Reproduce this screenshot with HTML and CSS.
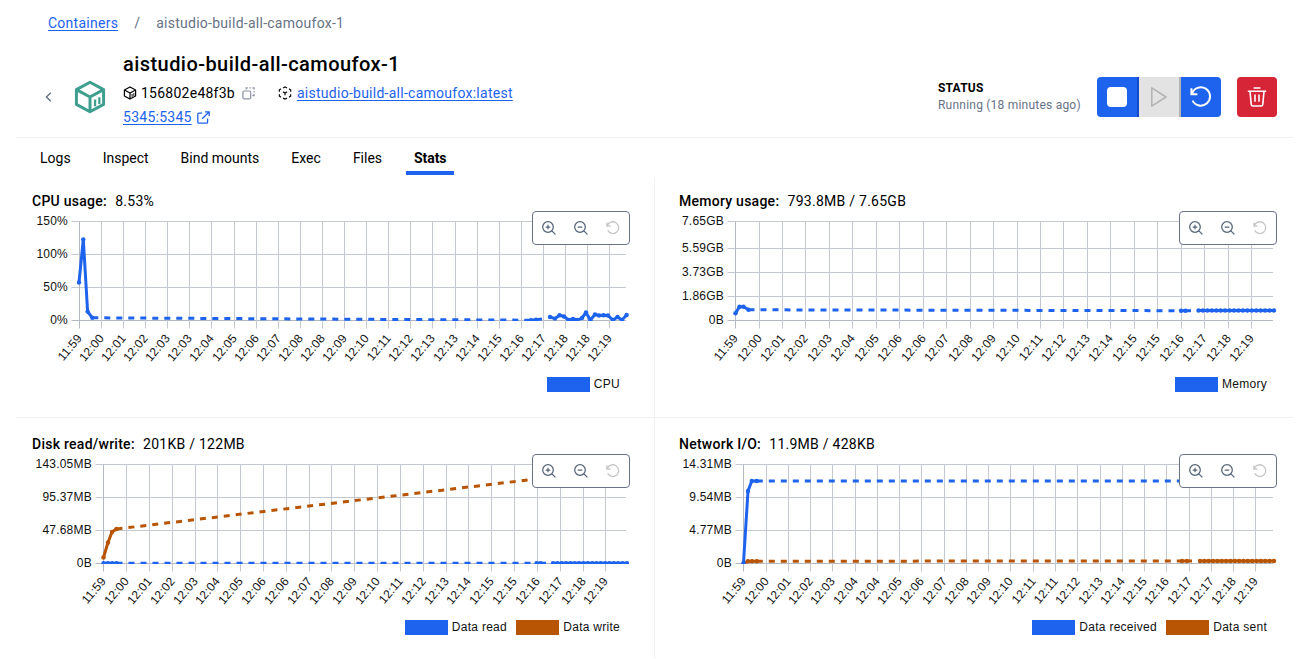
FILE: index.html
```html
<!DOCTYPE html>
<html lang="en">
<head>
<meta charset="utf-8">
<title>aistudio-build-all-camoufox-1</title>
<link rel="stylesheet" href="styles.css">
</head>
<body>
<svg width="0" height="0" class="sprite" aria-hidden="true">
  <symbol id="i-cube" viewBox="0 0 24 24">
    <path d="M12 1.6 21.6 6.8V17.2L12 22.4 2.4 17.2V6.8Z M2.4 6.8 12 12 21.6 6.8 M12 12V22.4" fill="none" stroke="currentColor" stroke-width="2.1" stroke-linejoin="round"/>
    <path d="M15.6 13.8V18.6M18.6 12.2V17" fill="none" stroke="currentColor" stroke-width="1.6"/>
  </symbol>
  <symbol id="i-zoom-in" viewBox="0 0 14 14">
    <path d="M6 .7a5.3 5.3 0 1 0 0 10.6A5.3 5.3 0 0 0 6 .7ZM9.9 9.9 13.4 13.4M6 3.7V8.3M3.7 6H8.3" fill="none" stroke="currentColor" stroke-width="1.25"/>
  </symbol>
  <symbol id="i-zoom-out" viewBox="0 0 14 14">
    <path d="M6 .7a5.3 5.3 0 1 0 0 10.6A5.3 5.3 0 0 0 6 .7ZM9.9 9.9 13.4 13.4M3.7 6H8.3" fill="none" stroke="currentColor" stroke-width="1.25"/>
  </symbol>
  <symbol id="i-reset" viewBox="0 0 22 22">
    <path d="M1.4 2.2V8.2H7.4M2 7.8A9.2 9.2 0 1 1 2.6 14.6" fill="none" stroke="currentColor" stroke-width="2"/>
  </symbol>
</svg>

<nav class="crumbs">
  <a href="#">Containers</a><span class="sep">/</span><span>aistudio-build-all-camoufox-1</span>
</nav>

<header class="head">
  <svg class="back" width="7" height="10" viewBox="0 0 7 10"><path d="M5.8 .8 1.4 5 5.8 9.2" fill="none" stroke="#677285" stroke-width="1.4"/></svg>
  <svg class="logo" width="34" height="34"><use href="#i-cube"/></svg>
  <div class="info">
    <h1>aistudio-build-all-camoufox-1</h1>
    <div class="meta">
      <svg class="cube" width="14" height="14"><use href="#i-cube"/></svg>
      <span class="hash">156802e48f3b</span>
      <svg class="copy" width="13" height="13" viewBox="0 0 13 13" fill="none" stroke="#8993a5" stroke-width="1.2"><rect x=".9" y="4" width="7.8" height="7.8" rx="1.2"/><path d="M4.2 2.4V.9H5.8M7.4.9H8.8M10.4.9H12V2.4M12 4V5.4M12 7V8.6H10.4"/></svg>
      <svg class="image" width="14" height="14" viewBox="0 0 14 14" fill="none" stroke="#111" stroke-width="1.3"><path d="M5 2 7 .9 9 2M11 2.9 12.6 3.8V5.8M12.6 8.2V10.2L11 11.1M9 12.1 7 13.1 5 12.1M3 11.1 1.4 10.2V8.2M1.4 5.8V3.8L3 2.9M7 7V9.3M7 7 5 5.9M7 7 9 5.9"/></svg>
      <a href="#">aistudio-build-all-camoufox:latest</a>
    </div>
    <div class="meta port">
      <a href="#">5345:5345</a>
      <svg width="13" height="13" viewBox="0 0 13 13" fill="none" stroke="#1d63ed" stroke-width="1.3"><path d="M5.2 2.2H2A1.2 1.2 0 0 0 .8 3.4V11A1.2 1.2 0 0 0 2 12.2H9.4A1.2 1.2 0 0 0 10.6 11V7.6M8 .8H12.2V5M12 1 5.2 7.8"/></svg>
    </div>
  </div>
  <div class="status">
    <strong>STATUS</strong>
    <span>Running (18 minutes ago)</span>
  </div>
  <div class="actions">
    <button class="stop" aria-label="Stop"><i></i></button>
    <button class="start" aria-label="Start"><svg width="18" height="22" viewBox="0 0 18 22"><path d="M1.8 1.8V20.2L16 11Z" fill="none" stroke="#b4b4b4" stroke-width="1.6" stroke-linejoin="round"/></svg></button>
    <button class="restart" aria-label="Restart"><svg width="22" height="22"><use href="#i-reset"/></svg></button>
  </div>
  <button class="trash" aria-label="Delete"><svg width="20" height="20" viewBox="0 0 20 20" fill="none" stroke="#fff" stroke-width="1.6"><path d="M.8 4.2H19.2M6.6 1H13.4M3 4.2 4.2 17.4A1.8 1.8 0 0 0 6 19H14A1.8 1.8 0 0 0 15.8 17.4L17 4.2M8 7.6V14.8M12 7.6V14.8"/></svg></button>
</header>

<nav class="tabs">
  <a>Logs</a><a>Inspect</a><a>Bind mounts</a><a>Exec</a><a>Files</a><a class="on">Stats</a>
</nav>

<main class="grid">
  <section class="panel" id="cpu"><h2>CPU usage: <span>8.53%</span></h2></section>
  <section class="panel" id="memory"><h2>Memory usage: <span>793.8MB / 7.65GB</span></h2></section>
  <section class="panel" id="disk"><h2>Disk read/write: <span>201KB / 122MB</span></h2></section>
  <section class="panel" id="network"><h2>Network I/O: <span>11.9MB / 428KB</span></h2></section>
</main>
<script src="charts.js"></script>
</body>
</html>
```

FILE: styles.css
```css
* { box-sizing: border-box; }
body {
  margin: 0;
  height: 659px;
  overflow: hidden;
  background: #fff;
  color: #000;
  font: 14px/20px Roboto, "Liberation Sans", sans-serif;
  letter-spacing: .26px;
}
.sprite { display: block; height: 0; }
svg { display: block; flex: none; }
a { color: #1d63ed; text-underline-offset: 2px; }
button { border: 0; padding: 0; display: grid; place-items: center; height: 40px; }

.crumbs { display: flex; height: 48px; padding: 13px 0 0 48px; color: #677285; }
.crumbs .sep { margin: 0 16px; }

.head {
  display: flex;
  align-items: flex-start;
  height: 90px;
  margin: 0 16px;
  border-bottom: 1px solid #f0f0f2;
}
.back { margin: 44px 0 0 28.5px; }
.logo { margin: 31.5px 0 0 21px; color: #3f9f8f; }
.info { flex: 1; margin-left: 16.5px; }
h1 { margin: 3px 0 0; font-size: 20px; line-height: 26px; font-weight: 500; letter-spacing: .44px; }
.meta { display: flex; align-items: center; margin-top: 6px; height: 20px; }
.meta.port { margin-top: 4px; gap: 5px; }
.hash { margin-left: 4px; letter-spacing: .25px; }
.copy { margin: 0 23.5px 0 7px; }
.image { margin-right: 4.5px; }

.status { width: 159px; padding-top: 32px; display: grid; font-size: 12px; line-height: 17px; color: #677285; letter-spacing: .22px; }
.status strong { font-weight: 700; color: #000; letter-spacing: .2px; }
.actions { display: flex; margin: 29px 16px 0 0; border-radius: 4px; overflow: hidden; }
.stop { width: 42px; background: #1d63ed; border-right: 2px solid #1249c8; }
.stop i { width: 20px; height: 20px; border-radius: 4px; background: #fff; }
.start { width: 42px; background: #e3e3e3; border-right: 2px solid #b4b4b4; }
.restart { width: 40px; background: #1d63ed; color: #fff; }
.trash { width: 40px; margin: 29px 16px 0 0; border-radius: 4px; background: #d52536; }

.tabs { display: flex; gap: 16px; height: 40px; padding: 0 0 3px 32px; line-height: 41px; letter-spacing: 0; }
.tabs a { height: 37px; padding: 0 8px; color: #000; }
.tabs .on { font-weight: 700; letter-spacing: -.1px; border-bottom: 4px solid #1d63ed; }

.grid { display: grid; grid-template-columns: 639px 638px; grid-template-rows: 240px 240px; margin: 0 16px; }
.panel { position: relative; padding: 13px 0 0 16px; border-bottom: 1px solid #f0f0f2; }
.panel:nth-child(odd) { border-right: 1px solid #f0f0f2; }
.panel:nth-child(even) { padding-left: 24px; }
.panel:nth-child(n+3) { padding-top: 16px; border-bottom: 0; }
h2 { margin: 0; font-size: 14px; line-height: 20px; font-weight: 500; }
h2 span { font-weight: 400; margin-left: 4.5px; }
.plot { position: relative; width: 598px; }
.plot text { font: 12px "Liberation Sans", Arial, sans-serif; letter-spacing: .2px; fill: #111; text-anchor: end; }
.tools {
  position: absolute;
  top: 0;
  right: 0;
  width: 98px;
  height: 34px;
  display: flex;
  align-items: center;
  justify-content: space-between;
  padding: 0 9px;
  border: 1px solid #677285;
  border-radius: 4px;
  background: #fff;
  color: #556378;
}
.tools .off { color: #c5c5c5; }
.legend { display: flex; justify-content: flex-end; gap: 9px; padding-right: 10px; font: 12px/15px "Liberation Sans", Arial, sans-serif; letter-spacing: .27px; color: #111; }
.legend span { display: flex; gap: 4.3px; }
.legend i { width: 43px; height: 15px; }
.blue { background: #1d63ed; }
.orange { background: #b85504; }
```

FILE: charts.js
```js
const BLUE = '#1d63ed', ORANGE = '#b85504';
const BASE = 109.5, TOP = 10.5, RIGHT = 594;

// Evenly spaced samples at a constant level.
function flat(from, to, step, y) {
  const pts = [];
  for (let x = from; x <= to + 0.01; x += step) pts.push([x, y]);
  return pts;
}

const charts = {
  cpu: {
    left: 47.5, step: 22.1, nudge: -0.15,
    times: '11:59 12:00 12:01 12:02 12:03 12:03 12:04 12:05 12:06 12:07 12:08 12:08 12:09 12:10 12:11 12:12 12:13 12:13 12:14 12:15 12:16 12:17 12:18 12:18 12:19',
    rows: [[10.5, '150%'], [43.5, '100%'], [76.5, '50%'], [109.5, '0%']],
    series: [{
      name: 'CPU', color: BLUE,
      head: [[47, 71.5], [51.3, 28.5], [55.6, 100.5], [60.3, 106.8]],
      mid: [[499, 109.2], [504, 108.7], [510, 108]],
      tail: [[518, 106], [523, 107.6], [527.5, 104.3], [532, 105.5], [536.5, 109], [541, 108], [545.5, 109], [550, 107], [554, 101.5], [558.4, 109], [563, 103.5], [567, 104.5], [571.5, 104.3], [576, 104.5], [581, 109], [585.5, 106], [590, 109], [594.6, 104]]
    }]
  },
  memory: {
    left: 56.5, step: 23.45, nudge: 0.1,
    times: '11:59 12:00 12:01 12:02 12:03 12:04 12:05 12:06 12:06 12:07 12:08 12:09 12:10 12:11 12:12 12:13 12:14 12:15 12:15 12:16 12:17 12:18 12:19',
    rows: [[10.5, '7.65GB'], [37.5, '5.59GB'], [61.5, '3.73GB'], [85.5, '1.86GB'], [109.5, '0B']],
    series: [{
      name: 'Memory', color: BLUE,
      head: [[56.5, 102.3], [60.5, 95.8], [64.5, 95.8], [69.5, 98.8]],
      mid: [[502, 99.7], [506.5, 99.7], [512, 99.7]],
      tail: flat(519.5, 595, 4.44, 99.5)
    }]
  },
  disk: {
    left: 71.5, step: 22.83, nudge: 0.2,
    times: '11:59 12:00 12:01 12:02 12:03 12:04 12:05 12:06 12:06 12:07 12:08 12:09 12:10 12:11 12:12 12:13 12:14 12:15 12:15 12:16 12:17 12:18 12:19',
    rows: [[10.5, '143.05MB'], [43.5, '95.37MB'], [76.5, '47.68MB'], [109.5, '0B']],
    series: [
      { name: 'Data write', color: ORANGE,
        head: [[71.5, 103.5], [76, 88.5], [80, 78], [84.5, 75]],
        mid: [[504, 25], [508, 25]], tail: flat(521, 595, 4.35, 25), hideTail: true },
      { name: 'Data read', color: BLUE,
        head: flat(71.5, 84.5, 4.33, 109.2),
        mid: [[504.5, 109.2], [508.5, 109.2], [514, 109.2]], tail: flat(521, 595, 4.35, 109.2) }
    ]
  },
  network: {
    left: 64.5, step: 22.27, nudge: 0.25,
    times: '11:59 12:00 12:01 12:02 12:03 12:04 12:04 12:05 12:06 12:07 12:08 12:09 12:10 12:11 12:11 12:12 12:13 12:14 12:15 12:16 12:17 12:17 12:18 12:19',
    rows: [[10.5, '14.31MB'], [43.5, '9.54MB'], [76.5, '4.77MB'], [109.5, '0B']],
    series: [
      { name: 'Data sent', color: ORANGE,
        head: [[64.5, 109.5], [68.8, 107.2], [73, 107.2], [77.8, 107.2]],
        mid: [[503, 107], [508, 107], [513, 107]], tail: flat(521, 595, 4.35, 107) },
      { name: 'Data received', color: BLUE,
        head: [[64.5, 109], [69, 37], [72.8, 27], [77.8, 27]],
        mid: [[503, 27], [508, 27]], tail: flat(521, 590, 4.35, 27), hideTail: true }
    ]
  }
};

const line = (pts, color, extra = '') =>
  `<polyline points="${pts.map(p => p.join()).join(' ')}" fill="none" stroke="${color}" stroke-width="3" stroke-linejoin="round" ${extra}/>`;
const dots = (pts, color) =>
  pts.map(p => `<circle cx="${p[0]}" cy="${p[1]}" r="2.2" fill="${color}"/>`).join('');

for (const [id, c] of Object.entries(charts)) {
  let s = '';
  for (const [y, label] of c.rows) {
    s += `<path d="M${c.left - 8} ${y}H${RIGHT}" stroke="${y === BASE ? '#b3b8c2' : '#c4c8d1'}"/>`;
    s += `<text x="${c.left - 11.6}" y="${y + 3.8}">${label}</text>`;
  }
  c.times.split(' ').forEach((t, i) => {
    const x = i ? Math.floor(c.left + i * c.step + c.nudge) + 0.5 : c.left;
    s += `<path d="M${x} ${TOP}V${BASE + 8}" stroke="${i ? '#c4c8d1' : '#b3b8c2'}"/>`;
    s += `<text transform="translate(${x - 0.4} ${BASE + 15}) rotate(-50)" y="4.6">${t}</text>`;
  });
  s += `<clipPath id="clip-${id}"><rect x="${c.left - 3}" y="${TOP - 3}" width="${RIGHT - c.left + 6}" height="${BASE - TOP + 3.5}"/></clipPath><g clip-path="url(#clip-${id})">`;
  for (const d of c.series) {
    s += line([d.head.at(-1), d.mid[0]], d.color, 'stroke-dasharray="6 6"');
    s += line(d.head, d.color) + dots(d.head, d.color);
    if (!d.hideTail) s += line(d.mid, d.color) + line(d.tail, d.color) + dots(d.tail, d.color) + dots(d.mid.slice(0, 2), d.color);
  }
  s += '</g>';
  const legend = [...c.series].sort((a, b) => (b.color === BLUE) - (a.color === BLUE));
  document.getElementById(id).insertAdjacentHTML('beforeend', `
    <div class="plot">
      <svg width="598" height="166">${s}</svg>
      <div class="tools">
        <svg width="14" height="14"><use href="#i-zoom-in"/></svg>
        <svg width="14" height="14"><use href="#i-zoom-out"/></svg>
        <svg class="off" width="14" height="14"><use href="#i-reset"/></svg>
      </div>
      <div class="legend">${legend.map(d => `<span><i class="${d.color === BLUE ? 'blue' : 'orange'}"></i>${d.name}</span>`).join('')}</div>
    </div>`);
}
```
